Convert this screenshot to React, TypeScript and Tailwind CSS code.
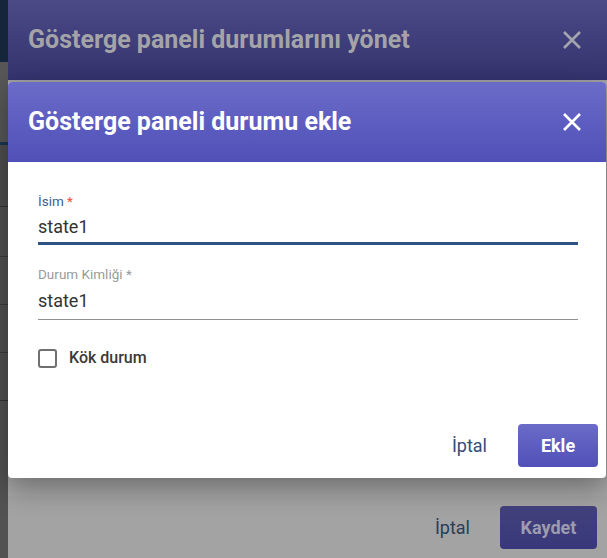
const font = { fontFamily: "Roboto, 'Liberation Sans', sans-serif" };

const CloseIcon = ({ className }: { className: string }) => (
  <svg viewBox="0 0 20 20" className={className} fill="none">
    <path d="M2 2L18 18M18 2L2 18" stroke="currentColor" strokeWidth="2.6" />
  </svg>
);

export default function App() {
  return (
    <div
      className="relative flex h-[558px] w-[607px] overflow-hidden bg-[#4d4d4d]"
      style={font}
    >
      {/* page behind the modals, dimmed */}
      <div className="flex w-2 shrink-0 flex-col">
        <div className="h-[62px] bg-[#15263a]" />
        <div className="h-[80px] bg-[#575757]" />
        <div className="h-[3px] bg-[#1a3550]" />
        <div className="h-[62px] border-b border-[#333] bg-[#4e4e4e]" />
        <div className="h-[50px] border-b border-[#3a3a3a] bg-[#505050]" />
        <div className="h-[48px] border-b border-[#3a3a3a] bg-[#505050]" />
        <div className="h-[48px] border-b border-[#3a3a3a] bg-[#505050]" />
        <div className="h-[48px] border-b border-[#333] bg-[#505050]" />
        <div className="flex-1 bg-[#525252]" />
      </div>

      {/* outer dialog (dimmed) */}
      <div className="flex flex-1 flex-col rounded-tl-[4px] bg-[#a3a3a3]">
        <div className="flex h-[80px] items-center justify-between bg-gradient-to-b from-[#4b4a87] to-[#34336e] pl-5 pr-[25px]">
          <h2 className="text-[25px] font-bold text-[#a4a4a8]">
            Gösterge paneli durumlarını yönet
          </h2>
          <CloseIcon className="h-[20px] w-[20px] text-[#a4a4ae]" />
        </div>
        <div className="flex-1 bg-gradient-to-b from-[#a0a0a0] to-[#a6a6a6]" />
        <div className="flex items-center justify-end gap-[30px] px-2.5 pb-[9px] pt-[10px]">
          <span className="text-[18px] text-[#2c3c58]">İptal</span>
          <span className="flex h-[43px] w-[97px] items-center justify-center rounded-[4px] bg-gradient-to-b from-[#43427d] to-[#38377a] text-[18px] font-bold text-[#9c9cae]">
            Kaydet
          </span>
        </div>
      </div>

      {/* inner dialog */}
      <div className="absolute left-2 top-[82px] flex w-[598px] flex-col overflow-hidden rounded-[4px] bg-white shadow-[0_10px_28px_rgba(0,0,0,0.35)]">
        <div className="flex h-[80px] items-center justify-between bg-gradient-to-b from-[#6b6bc8] to-[#5050b8] pl-5 pr-[24px]">
          <h2 className="text-[25px] font-bold text-white">
            Gösterge paneli durumu ekle
          </h2>
          <CloseIcon className="h-[20px] w-[20px] text-white" />
        </div>

        <div className="flex flex-col pl-[30px] pr-[28px] pt-[31px]">
          <label className="text-[13.5px] leading-[16px] text-[#3f5e8a]">
            İsim <span className="text-[#f4511e]">*</span>
          </label>
          <div className="border-b-[3px] border-[#2f5282] pb-[3px] pt-[5px] text-[18px] leading-[25px] text-[#333]">
            state1
          </div>

          <label className="mt-[21px] text-[13.5px] leading-[16px] text-[#9a9a9a]">
            Durum Kimliği *
          </label>
          <div className="border-b border-[#8f8f8f] pb-[6px] pt-[6px] text-[18px] leading-[25px] text-[#333]">
            state1
          </div>

          <div className="mt-[26px] flex items-center gap-[12px]">
            <span className="h-[19px] w-[19px] rounded-[3px] border-2 border-[#707070]" />
            <span className="text-[16px] font-medium text-[#3a3a3a]">Kök durum</span>
          </div>
        </div>

        <div className="mt-[54px] flex items-center justify-end gap-[31px] pb-[11px] pr-[8px]">
          <span className="text-[18px] text-[#2f4e7a]">İptal</span>
          <span className="flex h-[43px] w-[80px] items-center justify-center rounded-[4px] bg-gradient-to-b from-[#6b6bc8] to-[#5050b8] text-[18px] font-bold text-white">
            Ekle
          </span>
        </div>
      </div>
    </div>
  );
}
